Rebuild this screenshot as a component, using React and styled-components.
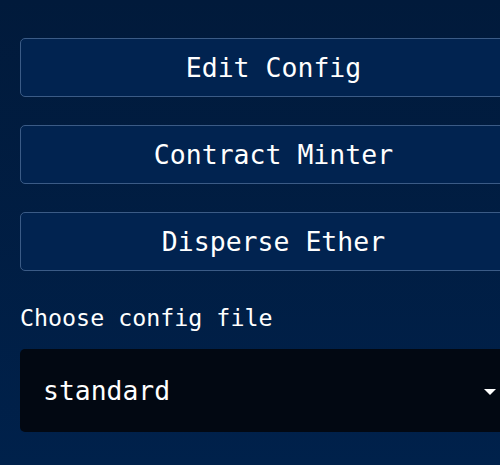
import React, { useState } from "react";
import styled, { createGlobalStyle } from "styled-components";

const GlobalStyle = createGlobalStyle`
  html, body {
    margin: 0;
    padding: 0;
    overflow: hidden;
  }
  body {
    background: linear-gradient(180deg, #011a3b 0%, #00214b 100%);
    min-height: 100vh;
    font-family: "DejaVu Sans Mono", "Liberation Mono", monospace;
    color: #ffffff;
  }
`;

const Page = styled.div`
  height: 465px;
  padding: 38px 0 0 20px;
  box-sizing: border-box;
  overflow: hidden;
`;

const Panel = styled.div`
  display: flex;
  flex-direction: column;
  width: 507px;
`;

const Buttons = styled.div`
  display: flex;
  flex-direction: column;
  gap: 28px;
`;

const ActionButton = styled.button`
  height: 59px;
  width: 100%;
  display: flex;
  align-items: center;
  justify-content: center;
  background-color: #012350;
  border: 1.5px solid #3b5b86;
  border-radius: 5px;
  color: #ffffff;
  font-family: "DejaVu Sans Mono", "Liberation Mono", monospace;
  font-size: 26.5px;
  cursor: pointer;
  padding: 0;

  &:hover {
    background-color: #022b60;
  }
`;

const Label = styled.label`
  margin-top: 31px;
  font-size: 23.3px;
  line-height: 32px;
`;

const SelectBox = styled.div`
  position: relative;
  margin-top: 15px;
  height: 83px;
  display: flex;
  align-items: center;
  background-color: #020812;
  border-radius: 5px;
  padding: 0 23px;
  font-size: 26.4px;
  cursor: pointer;
`;

const Caret = styled.span`
  position: absolute;
  right: 31px;
  top: 50%;
  margin-top: -2px;
  width: 0;
  height: 0;
  border-left: 6px solid transparent;
  border-right: 6px solid transparent;
  border-top: 6px solid #ffffff;
`;

const actions = ["Edit Config", "Contract Minter", "Disperse Ether"];

const App = () => {
  const [config] = useState("standard");

  return (
    <>
      <GlobalStyle />
      <Page>
        <Panel>
          <Buttons>
            {actions.map((a) => (
              <ActionButton key={a}>{a}</ActionButton>
            ))}
          </Buttons>
          <Label>Choose config file</Label>
          <SelectBox>
            {config}
            <Caret />
          </SelectBox>
        </Panel>
      </Page>
    </>
  );
};

export default App;
